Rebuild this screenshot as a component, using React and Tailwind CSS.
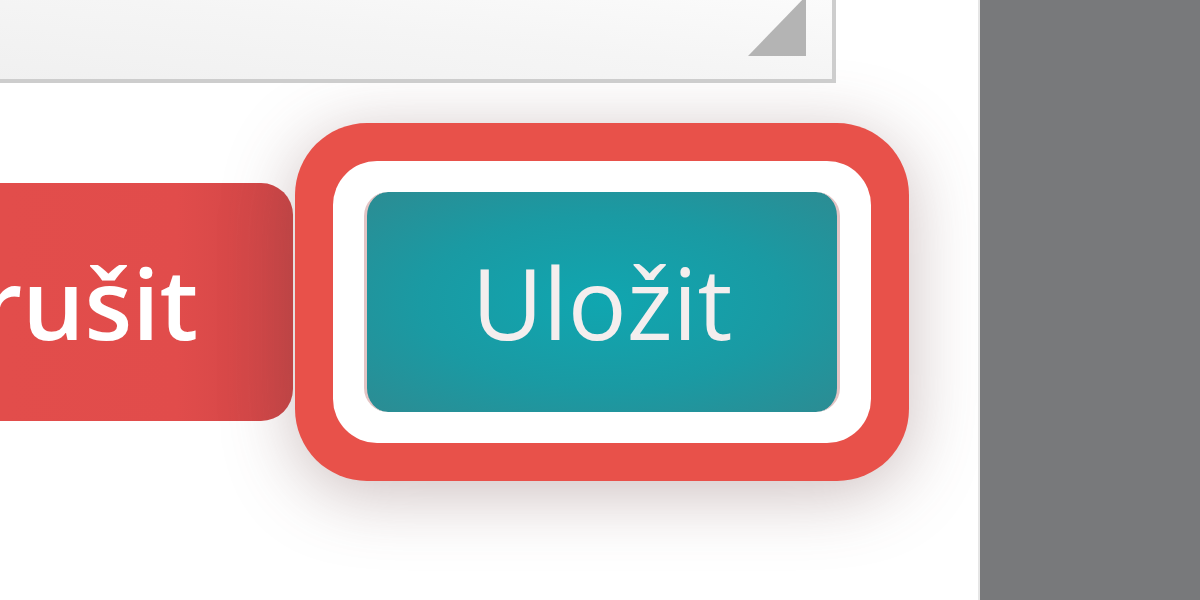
import React from "react";

export default function App() {
  return (
    <div className="flex h-[600px] w-[1200px] overflow-hidden bg-white" style={{ fontFamily: '"Open Sans", "Liberation Sans", sans-serif' }}>
      <div className="relative flex w-[978px] shrink-0 flex-col overflow-hidden bg-white">
        {/* textarea */}
        <div className="relative -ml-[20px] -mt-[20px] h-[103px] w-[856px] shrink-0 border-[4px] border-[#cdcdcd] bg-gradient-to-tr from-[#f0f0f0] via-[#f5f5f5] to-[#fcfcfc]">
          <svg className="absolute bottom-[23px] right-[26px]" width="60" height="60" viewBox="0 0 60 60">
            <polygon points="60,0 60,60 2,60" fill="#b4b4b4" />
          </svg>
        </div>

        {/* buttons */}
        <div className="-ml-[171px] mt-[40px] flex items-center gap-[2px]">
          <button className="h-[238px] w-[464px] shrink-0 rounded-[32px] bg-[linear-gradient(to_right,#e34e4b_0%,#e14c4b_75%,#cd4546_100%)] text-[98px] font-semibold text-white">
            Zrušit
          </button>
          <div className="shrink-0 rounded-[72px] bg-[#e8514a] p-[38px] shadow-[0_12px_70px_rgba(110,70,70,0.35)]">
            <div className="rounded-[44px] bg-white p-[31px]">
              <button className="flex h-[220px] w-[476px] items-center justify-center rounded-[24px] border-x-[3px] border-[#e3c4c4] bg-[radial-gradient(ellipse_at_center,#10a6b0_0%,#1a9aa3_55%,#2c8c93_100%)] text-[98px] font-normal text-[#f4eeee]">
                Uložit
              </button>
            </div>
          </div>
        </div>
      </div>
      <div className="w-[2px] shrink-0 bg-[#e6e6e6]" />
      <div className="flex-1 bg-[#78797b]" />
    </div>
  );
}
